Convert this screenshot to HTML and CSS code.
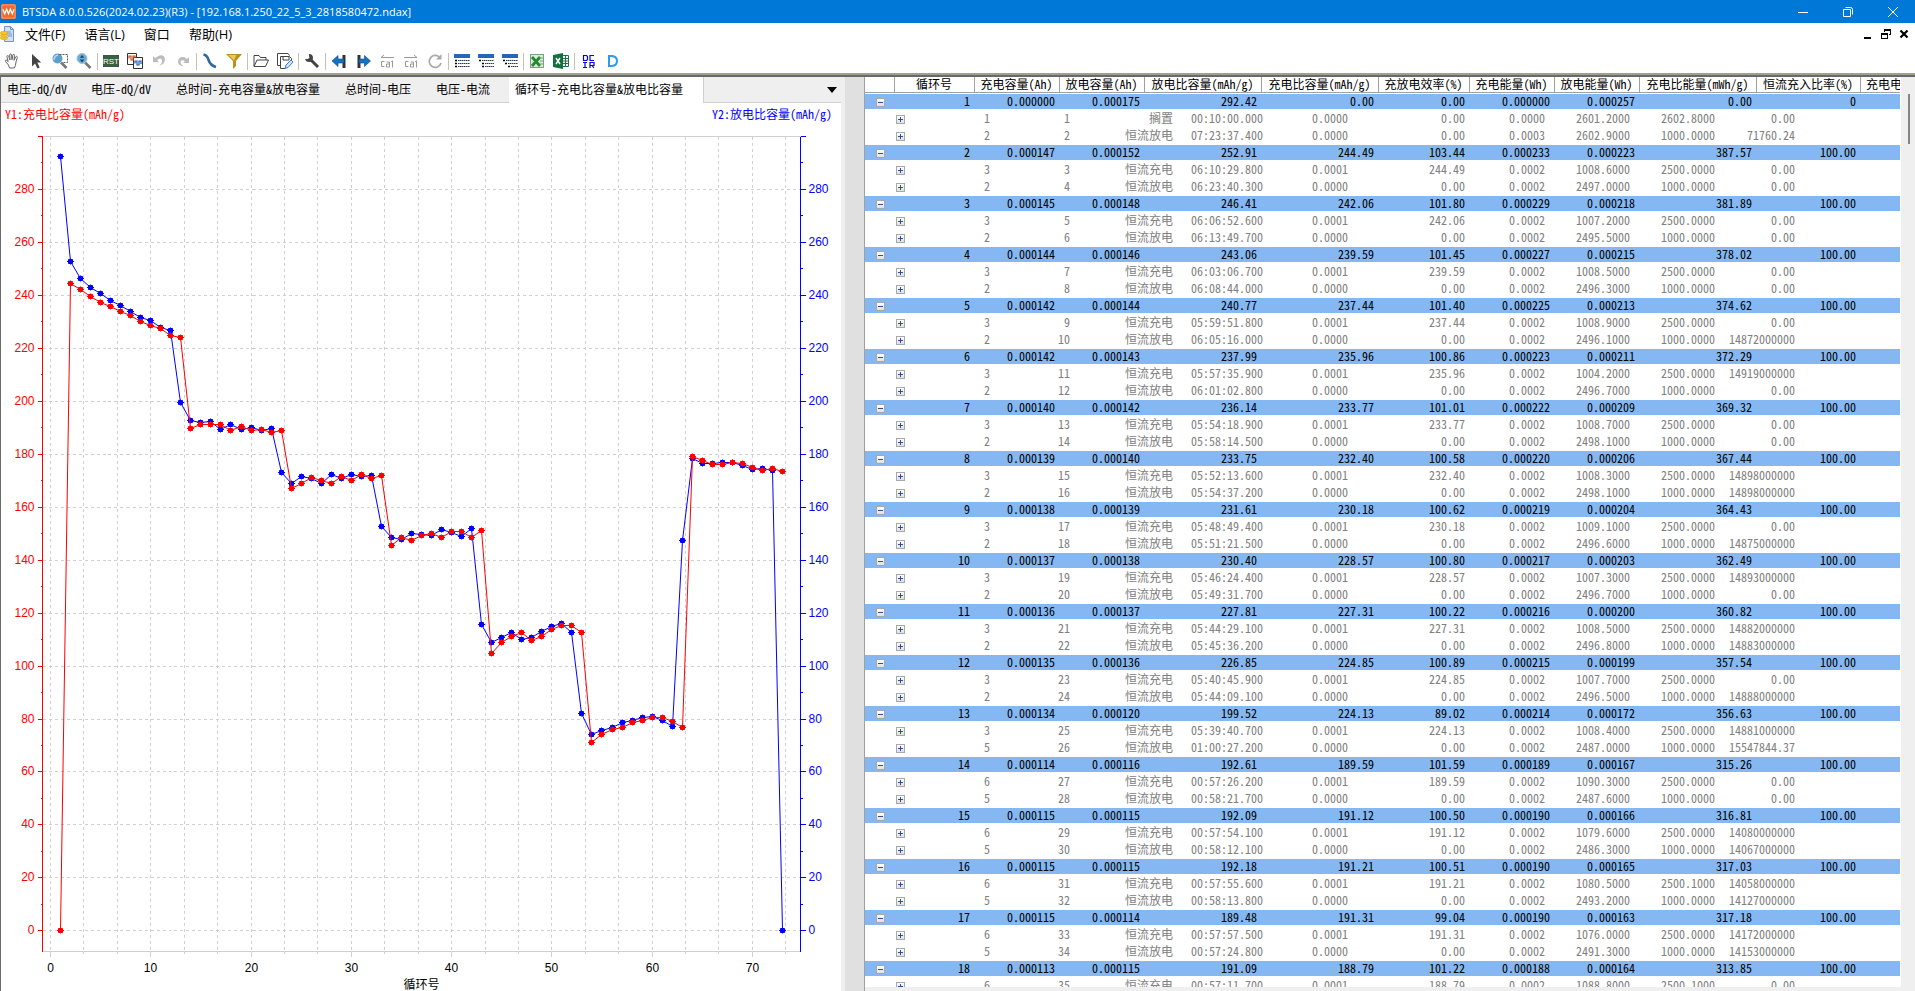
FILE: index.html
```html
<!DOCTYPE html>
<html lang="zh-CN">
<head>
<meta charset="utf-8">
<title>BTSDA</title>
<link rel="stylesheet" href="styles.css">
</head>
<body>
<div class="app">
  <header class="titlebar">
    <svg class="app-logo" viewBox="0 0 16 16" aria-hidden="true"><rect width="16" height="16" rx="2" fill="#f26a2e"/><path d="M1 1h14v14H1z" fill="none" stroke="#f9c3a6" stroke-width=".6"/><path d="M2 5.5l2 5 2-5 2 5 2-5 2 5 2-5" fill="none" stroke="#fff" stroke-width="1.3"/></svg>
    <h1 class="title">BTSDA 8.0.0.526(2024.02.23)(R3) - [192.168.1.250_22_5_3_2818580472.ndax]</h1>
    <div class="window-buttons">
      <button aria-label="最小化"><svg viewBox="0 0 12 12"><path d="M1 6.5h10"/></svg></button>
      <button aria-label="还原"><svg viewBox="0 0 12 12"><path d="M1.5 3.5h7v7h-7zM3.5 1.5h5q2 0 2 2v5"/></svg></button>
      <button aria-label="关闭"><svg viewBox="0 0 12 12"><path d="M1 1l10 10M11 1L1 11"/></svg></button>
    </div>
  </header>
  <nav class="menubar">
    <svg class="doc-icon" viewBox="0 0 14 16" aria-hidden="true"><path d="M4.5 .5h6l3 3v12h-9z" fill="#cfe0f7" stroke="#6d93cf"/><path d="M10.5 .5v3h3M6 6h5M6 8h6M8 10h4" fill="none" stroke="#6d93cf"/><g fill="#f7c52e" stroke="#dc9a12" stroke-width=".6"><ellipse cx="4" cy="12" rx="3.6" ry="1.7"/><ellipse cx="4" cy="9.5" rx="3.6" ry="1.7"/><ellipse cx="4" cy="7" rx="3.6" ry="1.7"/></g></svg>
    <button>文件(F)</button>
    <button>语言(L)</button>
    <button>窗口</button>
    <button>帮助(H)</button>
    <div class="mdi-buttons">
      <button aria-label="最小化子窗口"><svg viewBox="0 0 10 10"><path d="M1 8h7v2H1z" fill="#000"/></svg></button>
      <button aria-label="还原子窗口"><svg viewBox="0 0 10 10"><path d="M3 0h7v6H8V5h1V2H4v1H3zM0 4h7v6H0zM1 6v3h5V6z" fill="#000" fill-rule="evenodd"/></svg></button>
      <button aria-label="关闭子窗口"><svg viewBox="0 0 10 10"><path d="M1.5 1.5l7 7M8.5 1.5l-7 7" stroke="#000" stroke-width="2.2"/></svg></button>
    </div>
  </nav>
  <div class="toolbar" role="toolbar">
    <button aria-label="平移"><svg viewBox="0 0 16 16"><path d="M5.500 15l-1-3-3-3.500q-.8-1.200.3-1.500.8-.1 2.400 1.700L2.900 3.600q0-1 .8-1t1 .8L6 7 5.700 2q.1-1 .9-1t.9.9L8 6.800l.8-4.700q.2-.8 1-.7t.7 1L10 7.300l1.800-3.500q.5-.7 1.100-.4t.4 1.200L12 9l-.6 3.500-1 2.500z" fill="#fff" stroke="#666"/></svg></button>
    <button aria-label="选择"><svg viewBox="0 0 16 16"><path d="M4 1v12.500l3-3 2.500 5 2.200-1.100L9.300 9.600h4z" fill="#444"/></svg></button>
    <button aria-label="框选放大"><svg viewBox="0 0 16 16"><path d="M9 9.500l5.500 5.500" stroke="#777" stroke-width="2.600"/><circle cx="5.500" cy="5.500" r="5" fill="#5d9ecb"/><path d="M2 7q0-4 4-5" fill="none" stroke="#b7dcf2" stroke-width="1.500"/><path d="M7.500 1.500h8v8h-5" fill="none" stroke="#555" stroke-dasharray="2 1"/></svg></button>
    <button aria-label="缩放"><svg viewBox="0 0 16 16"><path d="M9 9.500l5.500 5.500" stroke="#777" stroke-width="2.600"/><circle cx="6" cy="5.500" r="5" fill="#6fabd3" stroke="#9bc4df"/><path d="M6 2l2.200 2.800H3.800zM6 9.500l2.200-2.900H3.800z" fill="#14456e"/></svg></button>
    <span class="sep"></span>
    <button aria-label="RST"><svg viewBox="0 0 16 16"><rect y="2" width="16" height="12" fill="#35633d"/><rect x=".5" y="2.500" width="15" height="11" fill="none" stroke="#4d4d4d"/><text x="8" y="11" text-anchor="middle" class="rst">RST</text></svg></button>
    <button aria-label="波形"><svg viewBox="0 0 16 16" fill="#fff"><path d="M.5.5h9v11h-9z" stroke="#333"/><path d="M6.500 4.500h9v11h-9z" stroke="#333"/><path d="M2 5.500V3h2v4h2V3h2v2" fill="none" stroke="#d0491c" stroke-width="1.200"/><path d="M8 10.500V8h2v4h2V8h2v3" fill="none" stroke="#1e5bb5" stroke-width="1.200"/></svg></button>
    <button aria-label="撤销"><svg viewBox="0 0 16 16"><path d="M2 3v6h6L6 7q4-3 5 0 .8 3-3 6 6-2 6-7-1-5-5.500-3.500Q6 3.500 4 5z" fill="#bcbcbc"/></svg></button>
    <button aria-label="重做"><svg viewBox="0 0 16 16"><path d="M14 4v6H8l2-2Q6 6 5.500 9q0 2 3 4.500-5.500-1-5.500-5 .5-5 5.500-4.500 2 .3 3.500 2z" fill="#bcbcbc"/></svg></button>
    <span class="sep"></span>
    <button aria-label="曲线"><svg viewBox="0 0 16 16"><path d="M1.500 1.500q4 1 5 5.500 2 5.500 7.500 7" fill="none" stroke="#2f6899" stroke-width="2.600"/></svg></button>
    <button aria-label="筛选"><svg viewBox="0 0 16 16"><path d="M0 1h16l-6 7v5l-3 3V8z" fill="#b8921c"/><path d="M2.500 2h8L8 7.500z" fill="#e6cb57"/></svg></button>
    <span class="sep"></span>
    <button aria-label="打开"><svg viewBox="0 0 16 16"><path d="M1 13V2.500h5l1.500 2H13V7M1 13.500L4 7h11.500l-3 6.500z" fill="#fff" stroke="#444"/></svg></button>
    <button aria-label="另存为"><svg viewBox="0 0 16 16"><path d="M3 12.500H.5V.5H11l1.500 2" fill="none" stroke="#444"/><path d="M8 15.500H3.500v-12h9l2 2V8M6 3.500V7h6V4" fill="none" stroke="#444"/><path d="M8 15.500l1-3.500 5-5 2 2-5 5.500z" fill="#cfe2ff" stroke="#3f78d0"/></svg></button>
    <span class="sep"></span>
    <button aria-label="设置"><svg viewBox="0 0 16 16"><path d="M7 7l7 7" stroke="#444" stroke-width="3"/><path d="M5 1q4 0 4 4-.5 4-4 4-3 0-4-3h3l1.500-1.500L5 3z" fill="#444"/></svg></button>
    <span class="sep"></span>
    <button aria-label="上一个"><svg viewBox="0 0 16 16"><path d="M13 2v13" stroke="#333" stroke-width="3"/><path d="M1 8l6-5.500V6h6v4H7v3.500z" fill="#1273c4" stroke="#134b80" stroke-width=".6"/></svg></button>
    <button aria-label="下一个"><svg viewBox="0 0 16 16"><path d="M4 2v13" stroke="#333" stroke-width="3"/><path d="M15.500 8l-6-5.500V6H4v4h5.500v3.500z" fill="#1273c4" stroke="#134b80" stroke-width=".6"/></svg></button>
    <button aria-label="前一循环"><svg viewBox="0 0 16 16" class="cal"><path d="M2 4.500h13M5 2L2 4.500M5.500 8.500h-3v5h3M7.500 9h3v5h-3v-3h3M13.500 7.500v7M12 8.500h1.500"/></svg></button>
    <button aria-label="后一循环"><svg viewBox="0 0 16 16" class="cal"><path d="M1 4.500h13M11 2l3 2.500M5.500 8.500h-3v5h3M7.500 9h3v5h-3v-3h3M13.500 7.500v7M12 8.500h1.500"/></svg></button>
    <button aria-label="刷新"><svg viewBox="0 0 16 16"><path d="M13.500 5.500A6 6 0 1 0 14 10" fill="none" stroke="#a9a9a9" stroke-width="1.700"/><path d="M14.500 1v5.500H9z" fill="#a9a9a9"/></svg></button>
    <span class="sep"></span>
    <button aria-label="循环层"><svg viewBox="0 0 16 16"><rect y="1" width="16" height="4" fill="#2467b8"/><path d="M1 7.500h2M1 10.500h2M1 13.500h2" stroke="#000" stroke-width="1.500"/><path d="M4 7.500h12M4 10.500h12M4 13.500h12" stroke="#27394d" stroke-dasharray="1.500 .5"/></svg></button>
    <button aria-label="工步层"><svg viewBox="0 0 16 16"><rect y="1" width="16" height="4" fill="#2467b8"/><path d="M1 7.500h2M4 10.500h2M4 13.500h2" stroke="#000" stroke-width="1.500"/><path d="M4 7.500h12M7 10.500h9M7 13.500h9" stroke="#27394d" stroke-dasharray="1.500 .5"/></svg></button>
    <button aria-label="记录层"><svg viewBox="0 0 16 16"><rect y="1" width="16" height="4" fill="#2467b8"/><path d="M1 7.500h2M3 10.500h2M6 13.500h2" stroke="#000" stroke-width="1.500"/><path d="M4 7.500h12M6 10.500h10M9 13.500h7" stroke="#27394d" stroke-dasharray="1.500 .5"/></svg></button>
    <span class="sep"></span>
    <button aria-label="导出表格"><svg viewBox="0 0 16 16"><rect x="1.500" y="1.500" width="13" height="13" fill="#dcebd9" stroke="#7ba37b"/><path d="M3 4l8 9M11 4l-8 9" stroke="#218a32" stroke-width="2.800"/><path d="M11 5h3M11 8h3M11 11h3" stroke="#7ba37b"/></svg></button>
    <button aria-label="导出 Excel"><svg viewBox="0 0 16 16"><path d="M9.500 2.500h6v11h-6zM9.500 5.500h6M9.500 8h6M9.500 10.500h6M12.500 2.500v11" fill="#fff" stroke="#1c7145"/><path d="M0 2l10-2v16L0 14z" fill="#14703f"/><path d="M3 5l4 6M7 5l-4 6" stroke="#fff" stroke-width="1.400"/></svg></button>
    <span class="sep"></span>
    <button aria-label="DCIR"><svg viewBox="0 0 16 16" class="dcir"><path d="M3.500 2.500h3l1 1v3l-1 1h-3zM14 2.500h-4v5h4M3 9.500h4M5 9.500v5M3 14.500h4M10 15V9.500h4v3h-4M12 12.500l2 2.500"/></svg></button>
    <button aria-label="D"><svg viewBox="0 0 16 16"><path d="M5 3H8q5 .5 5 5t-5 5H5z" fill="none" stroke="#2a9df0" stroke-width="2"/></svg></button>
  </div>

  <main class="workspace">
    <section class="chart-panel">
      <div class="tabs" role="tablist">
        <button role="tab">电压-dQ/dV</button>
        <button role="tab">电压-dQ/dV</button>
        <button role="tab">总时间-充电容量&amp;放电容量</button>
        <button role="tab">总时间-电压</button>
        <button role="tab">电压-电流</button>
        <button role="tab" class="active" aria-selected="true">循环号-充电比容量&amp;放电比容量</button>
        <button class="tab-menu" aria-label="更多标签"><svg viewBox="0 0 10 6"><path d="M0 0h10L5 6z"/></svg></button>
      </div>
      <div class="axis-names"><span class="y1">Y1:充电比容量(mAh/g)</span><span class="y2">Y2:放电比容量(mAh/g)</span></div>
      <div class="plot"><svg id="chart" role="img" aria-label="循环号-充电比容量&amp;放电比容量"></svg></div>
    </section>
    <div class="splitter"></div>
    <section class="data-panel">
      <div class="grid-view">
        <table class="grid">
          <thead>
            <tr><th></th><th>循环号</th><th>充电容量(Ah)</th><th>放电容量(Ah)</th><th>放电比容量(mAh/g)</th><th>充电比容量(mAh/g)</th><th>充放电效率(%)</th><th>充电能量(Wh)</th><th>放电能量(Wh)</th><th>充电比能量(mWh/g)</th><th>恒流充入比率(%)</th><th>充电电</th></tr>
          </thead>
          <tbody id="rows"></tbody>
        </table>
        <div class="scrollbar"><div class="thumb"></div></div>
      </div>
      <div class="hscroll"></div>
    </section>
  </main>
</div>
<script src="app.js"></script>
</body>
</html>
```
FILE: styles.css
```css
* { box-sizing: border-box; }
body {
  margin: 0;
  background: #fff;
  color: #000;
  font: 12px/17px "Noto Sans CJK SC", sans-serif;
}
button {
  margin: 0;
  padding: 0;
  border: 0;
  background: none;
  color: inherit;
  font: inherit;
}
svg { display: block; }
.app {
  height: 100vh;
  display: flex;
  flex-direction: column;
  overflow: hidden;
}

.titlebar {
  flex: none;
  display: flex;
  align-items: center;
  gap: 6px;
  height: 23px;
  padding-left: 1px;
  background: #0078d7;
  color: #fff;
}
.app-logo { width: 15px; height: 15px; }
.title {
  margin: 0;
  font: 11px/20px "Open Sans", sans-serif;
}
.window-buttons { display: flex; margin-left: auto; }
.window-buttons button {
  display: grid;
  place-items: center;
  width: 45px;
  height: 20px;
}
.window-buttons svg {
  width: 12px;
  height: 12px;
  fill: none;
  stroke: #fff;
}

.menubar {
  flex: none;
  display: flex;
  align-items: center;
  gap: 19px;
  height: 22px;
  padding-right: 6px;
  font-family: "Open Sans", "Noto Sans CJK SC", sans-serif;
  font-size: 13px;
}
.doc-icon { width: 14px; height: 16px; margin-right: -8px; }
.mdi-buttons { display: flex; gap: 8px; margin-left: auto; }
.mdi-buttons svg { width: 10px; height: 10px; }

.toolbar {
  flex: none;
  display: flex;
  align-items: center;
  height: 28px;
  padding-top: 4px;
}
.toolbar button { padding: 4px; }
.toolbar svg { width: 16px; height: 16px; }
.sep { width: 1px; height: 17px; margin: 0 1px; background: #c5c3b0; }
.rst { font: 8px "Liberation Sans", sans-serif; fill: #fff; }
.cal { fill: none; stroke: #9a9a9a; }
.dcir { fill: none; stroke: #0000e0; stroke-width: 1.2; }

.workspace {
  flex: 1;
  min-height: 0;
  display: flex;
  border-top: 2px solid #a0a090;
  box-shadow: inset 0 2px #696969;
  padding-top: 2px;
}
.chart-panel {
  flex: none;
  width: 44.125%;
  display: flex;
  flex-direction: column;
  border-left: 1px solid #696969;
  border-right: 4px solid #efefef;
}
.tabs, .axis-names, .grid {
  font-feature-settings: "hwid";
}
.tabs {
  flex: none;
  display: flex;
  height: 26px;
  background: #efefef;
}
.tabs button {
  padding: 0 13px 2px 12px;
  border-bottom: 1px solid #d0d0d0;
  white-space: nowrap;
}
.tabs button:first-child { padding: 0 12px 2px 6px; }
.tabs .active {
  padding: 0 20px 3px 6px;
  border-right: 1px solid #d0d0d0;
  border-bottom: 0;
  background: #fff;
}
.tabs button:nth-child(5) { padding-right: 19px; }
.tabs .tab-menu {
  flex: 1;
  display: flex;
  align-items: center;
  justify-content: flex-end;
  padding: 0 4px;
}
.tab-menu svg { width: 10px; height: 6px; }
.axis-names {
  flex: none;
  display: flex;
  justify-content: space-between;
  height: 24px;
  padding: 2px 9px 0 4px;
}
.y1 { color: #f00; }
.y2 { color: #00f; }
.plot { flex: 1; min-height: 0; }
#chart { width: 100%; height: 100%; }
#chart text { font: 12px "Liberation Sans", sans-serif; }
#chart .axis-title { font: 12px "Noto Sans CJK SC", sans-serif; }
#chart line { shape-rendering: crispEdges; }
.gridline { stroke: #d0d0d0; stroke-dasharray: 3 3; }
.frame { stroke: #d0d0d0; }
.red-axis { stroke: #f00; }
.blue-axis { stroke: #00f; }
#chart .red-text { fill: #f00; text-anchor: end; }
#chart .blue-text { fill: #00f; }
#chart .x-text { text-anchor: middle; }
.series { fill: none; }

.splitter { flex: none; width: 19px; background: #e0e0e0; }
.data-panel {
  flex: 1;
  min-width: 0;
  display: flex;
  flex-direction: column;
  border-left: 1px solid #a0a0a0;
}
.grid-view { flex: 1; min-height: 0; display: flex; gap: 1px; overflow: hidden; }
.grid {
  flex: 1;
  min-width: 0;
  display: block;
  overflow: hidden;
}
.grid thead, .grid tbody { display: block; }
.grid tr { display: grid; height: 17px; }
.grid th, .grid td {
  padding: 0;
  white-space: nowrap;
  text-align: right;
  font-weight: normal;
}
.grid thead tr, .cycle {
  grid-template-columns: 30px 80px 85px 85px 117px 117px 91px 85px 85px 117px 104px 1fr;
}
.grid thead tr {
  height: 16px;
  line-height: 14px;
  border-bottom: 1px solid #a0a0a0;
}
.grid th {
  padding-right: 2px;
  text-align: center;
  box-shadow: inset -1px 0 #a0a0a0;
}
.grid th:last-child { padding-left: 5px; text-align: left; box-shadow: none; }
.grid td { padding-right: 5px; }
.grid .cycle {
  background: #85b8f2;
  background-clip: content-box;
  padding: 1px 0;
  line-height: 13px;
}
.step {
  grid-template-columns: 47px 83px 80px 103px 90px 85px 117px 80px 85px 85px 80px 1fr;
  color: #808080;
  line-height: 15px;
}
.grid td.toggle {
  display: flex;
  align-items: center;
  justify-content: flex-end;
  padding: 2px 7px 0 0;
}
.grid .cycle td.toggle { padding-right: 10px; }
.toggle button {
  width: 9px;
  height: 9px;
  border: 1px solid #a8a8a8;
  background: linear-gradient(#fff, #e0e0e0);
}
.toggle svg { width: 7px; height: 7px; stroke: #2b4f9e; shape-rendering: crispEdges; }
.scrollbar { flex: none; width: 14px; padding: 17px 5px 0 0; background: #efefef; }
.thumb { width: 2px; height: 50px; margin-left: auto; background: #858585; }
.hscroll { flex: none; height: 4px; background: #efefef; }
```
FILE: app.js
```js
const cycles = [
  ["1 0.000000 0.000175 292.42 0.00 0.00 0.000000 0.000257 0.00 0",
   "1 1 搁置 00:10:00.000 0.0000 0.00 0.0000 2601.2000 2602.8000 0.00",
   "2 2 恒流放电 07:23:37.400 0.0000 0.00 0.0003 2602.9000 1000.0000 71760.24"],
  ["2 0.000147 0.000152 252.91 244.49 103.44 0.000233 0.000223 387.57 100.00",
   "3 3 恒流充电 06:10:29.800 0.0001 244.49 0.0002 1008.6000 2500.0000 0.00",
   "2 4 恒流放电 06:23:40.300 0.0000 0.00 0.0002 2497.0000 1000.0000 0.00"],
  ["3 0.000145 0.000148 246.41 242.06 101.80 0.000229 0.000218 381.89 100.00",
   "3 5 恒流充电 06:06:52.600 0.0001 242.06 0.0002 1007.2000 2500.0000 0.00",
   "2 6 恒流放电 06:13:49.700 0.0000 0.00 0.0002 2495.5000 1000.0000 0.00"],
  ["4 0.000144 0.000146 243.06 239.59 101.45 0.000227 0.000215 378.02 100.00",
   "3 7 恒流充电 06:03:06.700 0.0001 239.59 0.0002 1008.5000 2500.0000 0.00",
   "2 8 恒流放电 06:08:44.000 0.0000 0.00 0.0002 2496.3000 1000.0000 0.00"],
  ["5 0.000142 0.000144 240.77 237.44 101.40 0.000225 0.000213 374.62 100.00",
   "3 9 恒流充电 05:59:51.800 0.0001 237.44 0.0002 1008.9000 2500.0000 0.00",
   "2 10 恒流放电 06:05:16.000 0.0000 0.00 0.0002 2496.1000 1000.0000 14872000000"],
  ["6 0.000142 0.000143 237.99 235.96 100.86 0.000223 0.000211 372.29 100.00",
   "3 11 恒流充电 05:57:35.900 0.0001 235.96 0.0002 1004.2000 2500.0000 14919000000",
   "2 12 恒流放电 06:01:02.800 0.0000 0.00 0.0002 2496.7000 1000.0000 0.00"],
  ["7 0.000140 0.000142 236.14 233.77 101.01 0.000222 0.000209 369.32 100.00",
   "3 13 恒流充电 05:54:18.900 0.0001 233.77 0.0002 1008.7000 2500.0000 0.00",
   "2 14 恒流放电 05:58:14.500 0.0000 0.00 0.0002 2498.1000 1000.0000 0.00"],
  ["8 0.000139 0.000140 233.75 232.40 100.58 0.000220 0.000206 367.44 100.00",
   "3 15 恒流充电 05:52:13.600 0.0001 232.40 0.0002 1008.3000 2500.0000 14898000000",
   "2 16 恒流放电 05:54:37.200 0.0000 0.00 0.0002 2498.1000 1000.0000 14898000000"],
  ["9 0.000138 0.000139 231.61 230.18 100.62 0.000219 0.000204 364.43 100.00",
   "3 17 恒流充电 05:48:49.400 0.0001 230.18 0.0002 1009.1000 2500.0000 0.00",
   "2 18 恒流放电 05:51:21.500 0.0000 0.00 0.0002 2496.6000 1000.0000 14875000000"],
  ["10 0.000137 0.000138 230.40 228.57 100.80 0.000217 0.000203 362.49 100.00",
   "3 19 恒流充电 05:46:24.400 0.0001 228.57 0.0002 1007.3000 2500.0000 14893000000",
   "2 20 恒流放电 05:49:31.700 0.0000 0.00 0.0002 2496.7000 1000.0000 0.00"],
  ["11 0.000136 0.000137 227.81 227.31 100.22 0.000216 0.000200 360.82 100.00",
   "3 21 恒流充电 05:44:29.100 0.0001 227.31 0.0002 1008.5000 2500.0000 14882000000",
   "2 22 恒流放电 05:45:36.200 0.0000 0.00 0.0002 2496.8000 1000.0000 14883000000"],
  ["12 0.000135 0.000136 226.85 224.85 100.89 0.000215 0.000199 357.54 100.00",
   "3 23 恒流充电 05:40:45.900 0.0001 224.85 0.0002 1007.7000 2500.0000 0.00",
   "2 24 恒流放电 05:44:09.100 0.0000 0.00 0.0002 2496.5000 1000.0000 14888000000"],
  ["13 0.000134 0.000120 199.52 224.13 89.02 0.000214 0.000172 356.63 100.00",
   "3 25 恒流充电 05:39:40.700 0.0001 224.13 0.0002 1008.4000 2500.0000 14881000000",
   "5 26 恒流放电 01:00:27.200 0.0000 0.00 0.0002 2487.0000 1000.0000 15547844.37"],
  ["14 0.000114 0.000116 192.61 189.59 101.59 0.000189 0.000167 315.26 100.00",
   "6 27 恒流充电 00:57:26.200 0.0001 189.59 0.0002 1090.3000 2500.0000 0.00",
   "5 28 恒流放电 00:58:21.700 0.0000 0.00 0.0002 2487.6000 1000.0000 0.00"],
  ["15 0.000115 0.000115 192.09 191.12 100.50 0.000190 0.000166 316.81 100.00",
   "6 29 恒流充电 00:57:54.100 0.0001 191.12 0.0002 1079.6000 2500.0000 14080000000",
   "5 30 恒流放电 00:58:12.100 0.0000 0.00 0.0002 2486.3000 1000.0000 14067000000"],
  ["16 0.000115 0.000115 192.18 191.21 100.51 0.000190 0.000165 317.03 100.00",
   "6 31 恒流充电 00:57:55.600 0.0001 191.21 0.0002 1080.5000 2500.1000 14058000000",
   "5 32 恒流放电 00:58:13.800 0.0000 0.00 0.0002 2493.2000 1000.0000 14127000000"],
  ["17 0.000115 0.000114 189.48 191.31 99.04 0.000190 0.000163 317.18 100.00",
   "6 33 恒流充电 00:57:57.500 0.0001 191.31 0.0002 1076.0000 2500.0000 14172000000",
   "5 34 恒流放电 00:57:24.800 0.0000 0.00 0.0002 2491.3000 1000.0000 14153000000"],
  ["18 0.000113 0.000115 191.09 188.79 101.22 0.000188 0.000164 313.85 100.00",
   "6 35 恒流充电 00:57:11.700 0.0001 188.79 0.0002 1088.8000 2500.1000 0.00"]
];

function rowHtml(text, isCycle) {
  const sign = isCycle ? "M1 3.5h5" : "M1 3.5h5M3.5 1v5";
  const label = isCycle ? "折叠" : "展开";
  const cells = text.split(" ").map(v => `<td>${v}</td>`).join("");
  return `<tr class="${isCycle ? "cycle" : "step"}"><td class="toggle"><button aria-label="${label}"><svg viewBox="0 0 7 7"><path d="${sign}"/></svg></button></td>${cells}</tr>`;
}
document.getElementById("rows").innerHTML =
  cycles.map(c => c.map((t, i) => rowHtml(t, i === 0)).join("")).join("");

const discharge = [292.42, 252.91, 246.41, 243.06, 240.77, 237.99, 236.14, 233.75, 231.61, 230.4,
  227.81, 226.85, 199.52, 192.61, 192.09, 192.18, 189.48, 191.09, 189.4, 190.1,
  189, 189.8, 173.1, 169.1, 171.6, 171, 169, 172.4, 170.9, 172.4,
  171.6, 172, 152.8, 148.6, 147.9, 150.1, 149.7, 149.4, 151.6, 150.5,
  149, 152, 115.7, 109, 110.9, 112.7, 110.2, 110.9, 113, 115,
  116.1, 112.5, 82.1, 74.3, 75.7, 76.9, 78.6, 79.3, 80.4, 81,
  79.6, 77.2, 147.6, 178.4, 176.6, 176.5, 177, 176.9, 175.7, 174.3,
  174.6, 173.9, 0];
const charge = [0, 244.49, 242.06, 239.59, 237.44, 235.96, 233.77, 232.4, 230.18, 228.57,
  227.31, 224.85, 224.13, 189.59, 191.12, 191.21, 191.31, 188.79, 190.5, 189,
  189.4, 188.2, 189, 167.1, 169, 171.3, 170.1, 169, 171.6, 170.1,
  172.4, 170.9, 172, 145.6, 148.6, 147.5, 149.4, 150.1, 148.6, 150.9,
  150.9, 148.6, 151.2, 104.9, 109, 111.3, 112.7, 109.5, 111.3, 113.7,
  115.4, 115.4, 112.5, 71.3, 74, 75.9, 76.9, 78.6, 79.3, 80.4,
  80.4, 78.9, 76.9, 179.2, 177.7, 176.3, 176.2, 176.8, 176.6, 175,
  173.9, 174.8, 173.6];

const chart = document.getElementById("chart");

function drawChart() {
  const { width, height } = chart.parentElement.getBoundingClientRect();
  const left = 41.5, right = Math.round(width) - 40.5;
  const top = 9.5, bottom = Math.round(height) - 39.5;
  const x = n => left + (n + 0.8) / 75.6 * (right - left);
  const y = v => top + (300 - v) / 307.8 * (bottom - top);
  const snap = p => Math.floor(p) + 0.5;
  const line = (x1, y1, x2, y2, cls) => `<line x1="${x1}" y1="${y1}" x2="${x2}" y2="${y2}" class="${cls}"/>`;
  let out = "";

  for (let v = 0; v < 300; v += 20) out += line(left, snap(y(v)), right, snap(y(v)), "gridline");
  for (let i = 0; i <= 22; i++) {
    const px = snap(x(i * 10 / 3));
    out += line(px, top, px, bottom, "gridline");
    out += line(px, bottom, px, bottom + (i % 3 ? 2 : 5), "frame");
    if (i % 3 === 0) out += `<text x="${px}" y="${bottom + 20}" class="x-text">${i / 3 * 10}</text>`;
  }
  out += line(left, top, right, top, "frame") + line(left, bottom, right, bottom, "frame");
  out += line(left, top, left, bottom, "red-axis") + line(right, top, right, bottom, "blue-axis");
  for (let v = 0; v <= 300; v += 10) {
    const py = snap(y(v)), len = v % 20 && v < 300 ? 2 : 5;
    out += line(left - len, py, left, py, "red-axis") + line(right, py, right + len, py, "blue-axis");
    if (v % 20 === 0 && v < 300) {
      out += `<text x="${left - 8}" y="${py + 3}" class="red-text">${v}</text>`;
      out += `<text x="${right + 8}" y="${py + 3}" class="blue-text">${v}</text>`;
    }
  }
  for (const [data, color] of [[discharge, "#00f"], [charge, "#f00"]]) {
    const pts = data.map((v, i) => [snap(x(i + 1)), snap(y(v))]);
    out += `<polyline class="series" stroke="${color}" points="${pts.join(" ")}"/>`;
    out += `<path fill="${color}" stroke="${color}" d="${pts.map(([a, b]) => `M${a - 2} ${b - 2}h4v4h-4zM${a - 3.5} ${b}h7M${a} ${b - 3}v6`).join("")}"/>`;
  }
  out += `<text x="${(left + right) / 2}" y="${height - 2}" class="x-text axis-title">循环号</text>`;
  chart.innerHTML = out;
}
new ResizeObserver(drawChart).observe(chart.parentElement);
drawChart();
```
